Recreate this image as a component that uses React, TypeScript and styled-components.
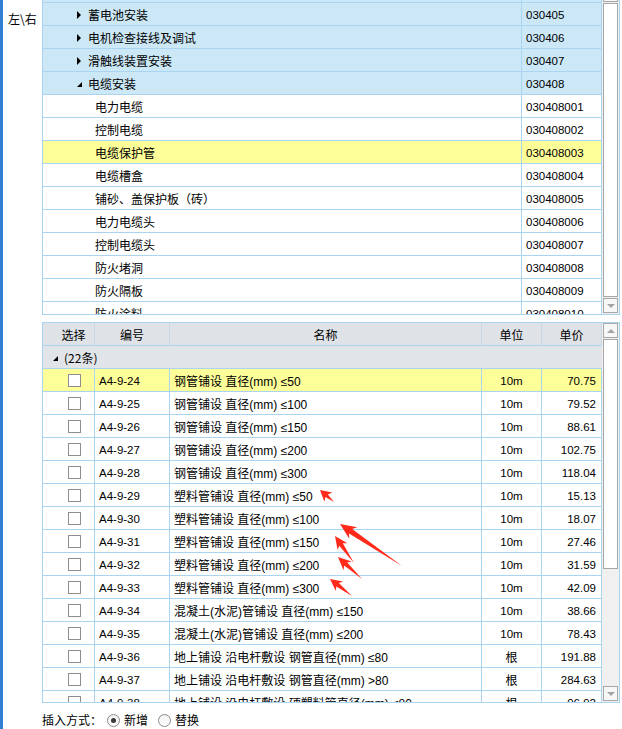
import React from 'react';
import styled, { createGlobalStyle } from 'styled-components';

const GlobalStyle = createGlobalStyle`
  html, body { margin: 0; padding: 0; background: #fff; }
  body {
    font-family: "Microsoft YaHei", "Noto Sans CJK SC", sans-serif;
    font-size: 12px;
    color: #000;
  }
  * { box-sizing: border-box; }
`;

const LINE = '#a9d5f2';

const Page = styled.div`
  position: relative;
  display: flex;
  width: 622px;
  height: 729px;
  overflow: hidden;
  background: #fff;
`;

const SideBar = styled.div`
  flex: none;
  width: 3px;
  background: #2f80d3;
`;

const LabelCol = styled.div`
  flex: none;
  width: 39px;
  padding: 11px 0 0 5px;
  line-height: 16px;
  white-space: nowrap;
`;

const Main = styled.div`
  flex: none;
  width: 578px;
  display: flex;
  flex-direction: column;
`;

/* ---------- shared scrollbar ---------- */
const ScrollCol = styled.div`
  flex: none;
  width: 17px;
  padding: 0 1px 1px 1px;
  display: flex;
  flex-direction: column;
  gap: 1px;
  background: #f0f0f0;
`;

const ScrollBtn = styled.div<{ $up?: boolean; $hiddenTop?: boolean }>`
  flex: none;
  width: 15px;
  height: 15px;
  border: 1px solid #a8a8a8;
  background: #f7f7f7;
  display: flex;
  align-items: center;
  justify-content: center;
  margin-top: ${(p) => (p.$hiddenTop ? '-13px' : '0')};
  &::after {
    content: '';
    width: 0;
    height: 0;
    border-left: 4px solid transparent;
    border-right: 4px solid transparent;
    ${(p) =>
      p.$up ? 'border-bottom: 4px solid #a4a4a4;' : 'border-top: 4px solid #a4a4a4;'}
  }
`;

const Thumb = styled.div<{ $h?: number }>`
  width: 15px;
  border: 1px solid #a8a8a8;
  background: #fff;
  ${(p) => (p.$h ? `height: ${p.$h}px; flex: none;` : 'flex: 1;')}
`;

const Track = styled.div`
  flex: 1;
`;

/* ---------- top tree panel ---------- */
const TopPanel = styled.div`
  height: 315px;
  display: flex;
  border-left: 1px solid ${LINE};
  border-right: 1px solid ${LINE};
  border-bottom: 1px solid ${LINE};
  overflow: hidden;
`;

const TreeGrid = styled.div`
  width: 559px;
  flex: none;
  overflow: hidden;
`;

const TreeList = styled.div`
  margin-top: -20px;
`;

const TreeRow = styled.div<{ $bg: string }>`
  display: grid;
  grid-template-columns: 479px 80px;
  height: 23px;
  background: ${(p) => p.$bg};
`;

const Cell = styled.div<{ $pl?: number; $pr?: number; $align?: string; $latin?: boolean }>`
  display: flex;
  align-items: center;
  justify-content: ${(p) => p.$align || 'flex-start'};
  height: 23px;
  padding: 1px ${(p) => p.$pr ?? 0}px 0 ${(p) => p.$pl ?? 4}px;
  border-right: 1px solid ${LINE};
  border-bottom: 1px solid ${LINE};
  white-space: nowrap;
  overflow: hidden;
  ${(p) =>
    p.$latin ? `font-family: "Liberation Sans", "Noto Sans CJK SC", sans-serif;` : ''}
`;

const NumText = styled.span`
  font-family: "Liberation Sans", "Noto Sans CJK SC", sans-serif;
  font-size: 11.5px;
`;

const Caret = styled.span<{ $open?: boolean }>`
  display: inline-block;
  width: 0;
  height: 0;
  margin-right: ${(p) => (p.$open ? '6px' : '7px')};
  ${(p) =>
    p.$open
      ? `border-left: 5px solid transparent; border-bottom: 5px solid #000; margin-top: 2px;`
      : `border-top: 4px solid transparent; border-bottom: 4px solid transparent; border-left: 4px solid #000;`}
`;

/* ---------- bottom table panel ---------- */
const BottomPanel = styled.div`
  margin-top: 7px;
  height: 381px;
  display: flex;
  border: 1px solid ${LINE};
  overflow: hidden;
`;

const TableArea = styled.div`
  width: 559px;
  flex: none;
  overflow: hidden;
`;

const COLS = '52px 75px 312px 60px 60px';

const HeaderRow = styled.div`
  display: grid;
  grid-template-columns: ${COLS};
  height: 23px;
  background: #dfe2e7;
`;

const HeadCell = styled.div<{ $pl?: number }>`
  display: flex;
  align-items: center;
  justify-content: center;
  padding: 1px 0 0 ${(p) => p.$pl ?? 0}px;
  border-right: 1px solid #c7d7e5;
  border-bottom: 1px solid ${LINE};
`;

const GroupRow = styled.div`
  height: 23px;
  display: flex;
  align-items: center;
  padding: 1px 0 0 10px;
  background: #e1e4e9;
  border-bottom: 1px solid ${LINE};
`;

const GroupCaret = styled.span`
  width: 0;
  height: 0;
  border-left: 5px solid transparent;
  border-bottom: 5px solid #000;
  margin: 2px 6px 0 0;
`;

const DataRow = styled.div<{ $bg: string }>`
  display: grid;
  grid-template-columns: ${COLS};
  height: 23px;
  background: ${(p) => p.$bg};
`;

const CheckBox = styled.span`
  width: 13px;
  height: 13px;
  border: 1px solid #8e8e8e;
  background: #fff;
`;

/* ---------- insert mode row ---------- */
const ModeRow = styled.div`
  display: flex;
  align-items: center;
  padding-top: 9px;
  line-height: 16px;
  white-space: nowrap;
`;

const ModeLabel = styled.span`
  margin-right: 5px;
`;

const RadioOpt = styled.label`
  display: inline-flex;
  align-items: center;
  gap: 4px;
  margin-right: 10px;
`;

const RadioCircle = styled.span<{ $on?: boolean }>`
  width: 13px;
  height: 13px;
  border-radius: 50%;
  border: 1px solid #8a8a8a;
  background: linear-gradient(#f2f2f2, #fff);
  display: flex;
  align-items: center;
  justify-content: center;
  &::after {
    content: '';
    width: 5px;
    height: 5px;
    border-radius: 50%;
    background: ${(p) => (p.$on ? '#3a3a3a' : 'transparent')};
  }
`;

/* ---------- annotation arrows ---------- */
const Overlay = styled.svg`
  position: absolute;
  left: 0;
  top: 0;
  pointer-events: none;
`;

type Arrow = { tx: number; ty: number; hx: number; hy: number; hl: number; hw: number; sw: number };

const arrows: Arrow[] = [
  { tx: 334, ty: 502, hx: 320, hy: 490, hl: 11, hw: 6, sw: 1.8 },
  { tx: 402, ty: 566, hx: 340, hy: 524, hl: 16, hw: 7, sw: 2.8 },
  { tx: 354, ty: 563, hx: 335, hy: 536, hl: 13, hw: 6, sw: 2.2 },
  { tx: 362, ty: 579, hx: 338, hy: 557, hl: 13, hw: 6, sw: 2.2 },
  { tx: 352, ty: 596, hx: 330, hy: 579, hl: 12, hw: 6, sw: 2.2 },
];

function arrowPoints(a: Arrow): string {
  const dx = a.hx - a.tx;
  const dy = a.hy - a.ty;
  const len = Math.hypot(dx, dy);
  const ux = dx / len;
  const uy = dy / len;
  const nx = -uy;
  const ny = ux;
  const bx = a.hx - ux * a.hl;
  const by = a.hy - uy * a.hl;
  const bx2 = a.hx - ux * (a.hl * 0.8);
  const by2 = a.hy - uy * (a.hl * 0.8);
  const pts = [
    [a.tx, a.ty],
    [bx2 + nx * a.sw, by2 + ny * a.sw],
    [bx + nx * a.hw, by + ny * a.hw],
    [a.hx, a.hy],
    [bx - nx * a.hw, by - ny * a.hw],
    [bx2 - nx * a.sw, by2 - ny * a.sw],
  ];
  return pts.map((p) => `${p[0].toFixed(1)},${p[1].toFixed(1)}`).join(' ');
}

/* ---------- data ---------- */
type TreeItem = { name: string; code: string; kind: 'closed' | 'open' | 'leaf'; sel?: boolean };

const tree: TreeItem[] = [
  { name: '控制设备及低压电器安装', code: '030404', kind: 'closed' },
  { name: '蓄电池安装', code: '030405', kind: 'closed' },
  { name: '电机检查接线及调试', code: '030406', kind: 'closed' },
  { name: '滑触线装置安装', code: '030407', kind: 'closed' },
  { name: '电缆安装', code: '030408', kind: 'open' },
  { name: '电力电缆', code: '030408001', kind: 'leaf' },
  { name: '控制电缆', code: '030408002', kind: 'leaf' },
  { name: '电缆保护管', code: '030408003', kind: 'leaf', sel: true },
  { name: '电缆槽盒', code: '030408004', kind: 'leaf' },
  { name: '铺砂、盖保护板（砖）', code: '030408005', kind: 'leaf' },
  { name: '电力电缆头', code: '030408006', kind: 'leaf' },
  { name: '控制电缆头', code: '030408007', kind: 'leaf' },
  { name: '防火堵洞', code: '030408008', kind: 'leaf' },
  { name: '防火隔板', code: '030408009', kind: 'leaf' },
  { name: '防火涂料', code: '030408010', kind: 'leaf' },
  { name: '电缆分支箱', code: '030408011', kind: 'leaf' },
];

type Item = { code: string; name: string; unit: string; price: string };

const items: Item[] = [
  { code: 'A4-9-24', name: '钢管铺设 直径(mm) ≤50', unit: '10m', price: '70.75' },
  { code: 'A4-9-25', name: '钢管铺设 直径(mm) ≤100', unit: '10m', price: '79.52' },
  { code: 'A4-9-26', name: '钢管铺设 直径(mm) ≤150', unit: '10m', price: '88.61' },
  { code: 'A4-9-27', name: '钢管铺设 直径(mm) ≤200', unit: '10m', price: '102.75' },
  { code: 'A4-9-28', name: '钢管铺设 直径(mm) ≤300', unit: '10m', price: '118.04' },
  { code: 'A4-9-29', name: '塑料管铺设 直径(mm) ≤50', unit: '10m', price: '15.13' },
  { code: 'A4-9-30', name: '塑料管铺设 直径(mm) ≤100', unit: '10m', price: '18.07' },
  { code: 'A4-9-31', name: '塑料管铺设 直径(mm) ≤150', unit: '10m', price: '27.46' },
  { code: 'A4-9-32', name: '塑料管铺设 直径(mm) ≤200', unit: '10m', price: '31.59' },
  { code: 'A4-9-33', name: '塑料管铺设 直径(mm) ≤300', unit: '10m', price: '42.09' },
  { code: 'A4-9-34', name: '混凝土(水泥)管铺设 直径(mm) ≤150', unit: '10m', price: '38.66' },
  { code: 'A4-9-35', name: '混凝土(水泥)管铺设 直径(mm) ≤200', unit: '10m', price: '78.43' },
  { code: 'A4-9-36', name: '地上铺设 沿电杆敷设 钢管直径(mm) ≤80', unit: '根', price: '191.88' },
  { code: 'A4-9-37', name: '地上铺设 沿电杆敷设 钢管直径(mm) >80', unit: '根', price: '284.63' },
  { code: 'A4-9-38', name: '地上铺设 沿电杆敷设 硬塑料管直径(mm) ≤80', unit: '根', price: '96.92' },
];

const YELLOW = '#ffff9a';
const BLUE = '#cce8f7';

export default function App() {
  return (
    <Page>
      <GlobalStyle />
      <SideBar />
      <LabelCol>左\右</LabelCol>
      <Main>
        <TopPanel>
          <TreeGrid>
            <TreeList>
              {tree.map((t) => (
                <TreeRow key={t.code} $bg={t.sel ? YELLOW : t.kind === 'leaf' ? '#fff' : BLUE}>
                  <Cell $pl={t.kind === 'leaf' ? 52 : 34}>
                    {t.kind !== 'leaf' && <Caret $open={t.kind === 'open'} />}
                    {t.name}
                  </Cell>
                  <Cell $pl={4}>
                    <NumText>{t.code}</NumText>
                  </Cell>
                </TreeRow>
              ))}
            </TreeList>
          </TreeGrid>
          <ScrollCol>
            <ScrollBtn $up $hiddenTop />
            <Thumb />
            <ScrollBtn />
          </ScrollCol>
        </TopPanel>

        <BottomPanel>
          <TableArea>
            <HeaderRow>
              <HeadCell $pl={10}>选择</HeadCell>
              <HeadCell>编号</HeadCell>
              <HeadCell>名称</HeadCell>
              <HeadCell>单位</HeadCell>
              <HeadCell>单价</HeadCell>
            </HeaderRow>
            <GroupRow>
              <GroupCaret />
              (22条)
            </GroupRow>
            {items.map((it, i) => (
              <DataRow key={it.code} $bg={i === 0 ? YELLOW : '#fff'}>
                <Cell $pl={25}>
                  <CheckBox />
                </Cell>
                <Cell $pl={4}>
                  <NumText>{it.code}</NumText>
                </Cell>
                <Cell $pl={4} $latin>
                  {it.name}
                </Cell>
                <Cell $pl={0} $align="center">
                  {it.unit === '根' ? it.unit : <NumText>{it.unit}</NumText>}
                </Cell>
                <Cell $pl={0} $pr={5} $align="flex-end">
                  <NumText>{it.price}</NumText>
                </Cell>
              </DataRow>
            ))}
          </TableArea>
          <ScrollCol>
            <ScrollBtn $up />
            <Thumb $h={230} />
            <Track />
            <ScrollBtn />
          </ScrollCol>
        </BottomPanel>

        <ModeRow>
          <ModeLabel>插入方式：</ModeLabel>
          <RadioOpt>
            <RadioCircle $on />
            新增
          </RadioOpt>
          <RadioOpt>
            <RadioCircle />
            替换
          </RadioOpt>
        </ModeRow>
      </Main>
      <Overlay width={622} height={729} viewBox="0 0 622 729">
        {arrows.map((a, i) => (
          <polygon key={i} points={arrowPoints(a)} fill="#ff2a1a" />
        ))}
      </Overlay>
    </Page>
  );
}
